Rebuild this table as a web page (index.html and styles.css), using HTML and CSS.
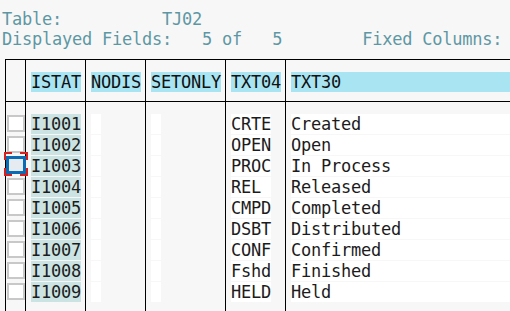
FILE: index.html
```html
<!DOCTYPE html>
<html>
<head>
<meta charset="utf-8">
<link rel="stylesheet" href="styles.css">
</head>
<body>
<div class="info">
  <div class="line">Table:          TJ02</div>
  <div class="line">Displayed Fields:   5 of   5        Fixed Columns:</div>
</div>
<div class="grid">
  <div class="hd c0"></div>
  <div class="hd"><span class="lbl">ISTAT</span></div>
  <div class="hd"><span class="lbl">NODIS</span></div>
  <div class="hd"><span class="lbl">SETONLY</span></div>
  <div class="hd"><span class="lbl">TXT04</span></div>
  <div class="hd"><span class="lbl w30">TXT30</span></div>

  <div class="c0"></div><div></div><div></div><div></div><div></div><div></div>

  <div class="c0"><span class="cb"></span></div><div><span class="f key w5">I1001</span></div><div><span class="f w1"></span></div><div><span class="f w1"></span></div><div><span class="f w4">CRTE</span></div><div><span class="f w30">Created</span></div>
  <div class="c0"><span class="cb"></span></div><div><span class="f key w5">I1002</span></div><div><span class="f w1"></span></div><div><span class="f w1"></span></div><div><span class="f w4">OPEN</span></div><div><span class="f w30">Open</span></div>
  <div class="c0 focus-cell"><span class="cb sel"></span><svg class="focus" width="24" height="24" viewBox="0 0 24 24"><path d="M1 8V1H8M16 1H23V8M23 16V23H16M8 23H1V16" fill="none" stroke="#d61f1f" stroke-width="2"/></svg></div><div><span class="f key w5">I1003</span></div><div><span class="f w1"></span></div><div><span class="f w1"></span></div><div><span class="f w4">PROC</span></div><div><span class="f w30">In Process</span></div>
  <div class="c0"><span class="cb"></span></div><div><span class="f key w5">I1004</span></div><div><span class="f w1"></span></div><div><span class="f w1"></span></div><div><span class="f w4">REL</span></div><div><span class="f w30">Released</span></div>
  <div class="c0"><span class="cb"></span></div><div><span class="f key w5">I1005</span></div><div><span class="f w1"></span></div><div><span class="f w1"></span></div><div><span class="f w4">CMPD</span></div><div><span class="f w30">Completed</span></div>
  <div class="c0"><span class="cb"></span></div><div><span class="f key w5">I1006</span></div><div><span class="f w1"></span></div><div><span class="f w1"></span></div><div><span class="f w4">DSBT</span></div><div><span class="f w30">Distributed</span></div>
  <div class="c0"><span class="cb"></span></div><div><span class="f key w5">I1007</span></div><div><span class="f w1"></span></div><div><span class="f w1"></span></div><div><span class="f w4">CONF</span></div><div><span class="f w30">Confirmed</span></div>
  <div class="c0"><span class="cb"></span></div><div><span class="f key w5">I1008</span></div><div><span class="f w1"></span></div><div><span class="f w1"></span></div><div><span class="f w4">Fshd</span></div><div><span class="f w30">Finished</span></div>
  <div class="c0"><span class="cb"></span></div><div><span class="f key w5">I1009</span></div><div><span class="f w1"></span></div><div><span class="f w1"></span></div><div><span class="f w4">HELD</span></div><div><span class="f w30">Held</span></div>

  <div class="c0"></div><div></div><div></div><div></div><div></div><div></div>
</div>
</body>
</html>
```
FILE: styles.css
```css
html, body {
  margin: 0;
  height: 100%;
}
body {
  background: #f7f7f7;
  font-family: "DejaVu Sans Mono", monospace;
  font-size: 17px;
  letter-spacing: -0.23px;
  color: #1c1c1c;
  display: flex;
  flex-direction: column;
  overflow: hidden;
}
.info {
  padding: 9px 0 0 2px;
  margin-bottom: 10px;
  color: #5e97a4;
}
.line {
  white-space: pre;
  height: 20px;
  line-height: 20px;
}
.grid {
  flex: 1;
  display: grid;
  grid-template-columns: 20px 60px 60px 80px 60px 1fr;
  grid-template-rows: 43px 12px repeat(9, 21px) 1fr;
  margin-left: 5px;
}
.grid > div {
  border-left: 1px solid #000;
  padding-left: 5px;
  overflow: hidden;
  white-space: pre;
  line-height: 20px;
}
.grid > .c0 {
  padding-left: 1px;
  overflow: visible;
}
.grid > .hd {
  border-top: 1px solid #000;
  border-bottom: 1px solid #000;
  padding-top: 12px;
}
.lbl {
  display: inline-block;
  height: 20px;
  background: #a8e4f2;
  color: #111;
}
.f {
  display: inline-block;
  height: 20px;
  vertical-align: top;
  background: #fff;
}
.key {
  background: #cbe3e3;
}
.w1 { width: 10px; }
.w4 { width: 40px; }
.w5 { width: 50px; }
.w30 { width: 300px; }
.cb {
  display: block;
  box-sizing: border-box;
  width: 18px;
  height: 17px;
  margin-top: 1px;
  border: 2px solid #c8c8c8;
  background: #fff;
}
.cb.sel {
  width: 20px;
  height: 18px;
  margin-top: 0;
  margin-left: -1px;
  border: 3px solid #0b6cb3;
  background: #e5ebf0;
}
.focus-cell {
  position: relative;
}
.focus {
  position: absolute;
  left: -2px;
  top: -4px;
}
```
